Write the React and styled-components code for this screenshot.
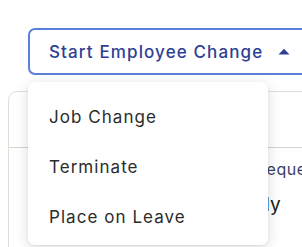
import React from "react";
import styled, { createGlobalStyle } from "styled-components";

const Global = createGlobalStyle`
  html, body { margin: 0; padding: 0; background: #ffffff; }
  body { font-family: "Inter", "Lato", sans-serif; overflow: hidden; }
  * { box-sizing: border-box; }
`;

const Page = styled.div`
  position: relative;
  width: 302px;
  height: 247px;
  overflow: hidden;
  padding: 28px 0 0 8px;
`;

const TriggerRow = styled.div`
  display: flex;
  padding-left: 20px;
`;

const Trigger = styled.button`
  flex: none;
  display: flex;
  align-items: center;
  gap: 15px;
  width: 300px;
  height: 47px;
  padding: 0 0 0 19px;
  border: 2px solid #5a7fd8;
  border-radius: 7px;
  background: #fff;
  color: #2f3f95;
  font-family: inherit;
  font-size: 17px;
  font-weight: 500;
  letter-spacing: 1.12px;
  cursor: pointer;
`;

const Caret = styled.svg`
  width: 12px;
  height: 7px;
  flex: none;
`;

const Card = styled.div`
  margin-top: 16px;
  width: 330px;
  height: 200px;
  border: 1px solid #e2ddd7;
  border-radius: 9px;
  background: #fff;
`;

const CardHeader = styled.div`
  height: 56px;
  border-bottom: 1px solid #d8d3cd;
`;

const CardBody = styled.div`
  display: flex;
  flex-direction: column;
  gap: 16px;
  padding: 11px 0 0 0;
`;

const CellLabel = styled.div`
  padding-left: ${(p) => p.$indent}px;
  font-size: 16px;
  color: #3b3e66;
  line-height: 20px;
  letter-spacing: 0.5px;
  white-space: nowrap;
`;

const CellValue = styled.div`
  padding-left: ${(p) => p.$indent}px;
  font-size: 19px;
  font-weight: 400;
  color: #1a1a1a;
  line-height: 20px;
  white-space: nowrap;
`;

const Menu = styled.ul`
  position: absolute;
  top: 82px;
  left: 28px;
  width: 240px;
  margin: 0;
  padding: 10px 0 3px;
  list-style: none;
  background: #fff;
  border-radius: 7px;
  box-shadow: 0 3px 14px rgba(0, 0, 0, 0.14), 0 1px 3px rgba(0, 0, 0, 0.06);
`;

const MenuItem = styled.li`
  height: 50px;
  display: flex;
  align-items: center;
  padding-left: 21px;
  font-size: 17px;
  letter-spacing: 1.05px;
  color: #2b2b2b;
`;

export default function App() {
  return (
    <>
      <Global />
      <Page>
        <TriggerRow>
          <Trigger>
            Start Employee Change
            <Caret viewBox="0 0 12 7">
              <path d="M0.5 6.5 L6 0.8 L11.5 6.5 Z" fill="#2f3f95" />
            </Caret>
          </Trigger>
        </TriggerRow>
        <Card>
          <CardHeader />
          <CardBody>
            <CellLabel $indent={247}>Request</CellLabel>
            <CellValue $indent={199}>Monthly</CellValue>
          </CardBody>
        </Card>
        <Menu>
          <MenuItem>Job Change</MenuItem>
          <MenuItem>Terminate</MenuItem>
          <MenuItem>Place on Leave</MenuItem>
        </Menu>
      </Page>
    </>
  );
}
